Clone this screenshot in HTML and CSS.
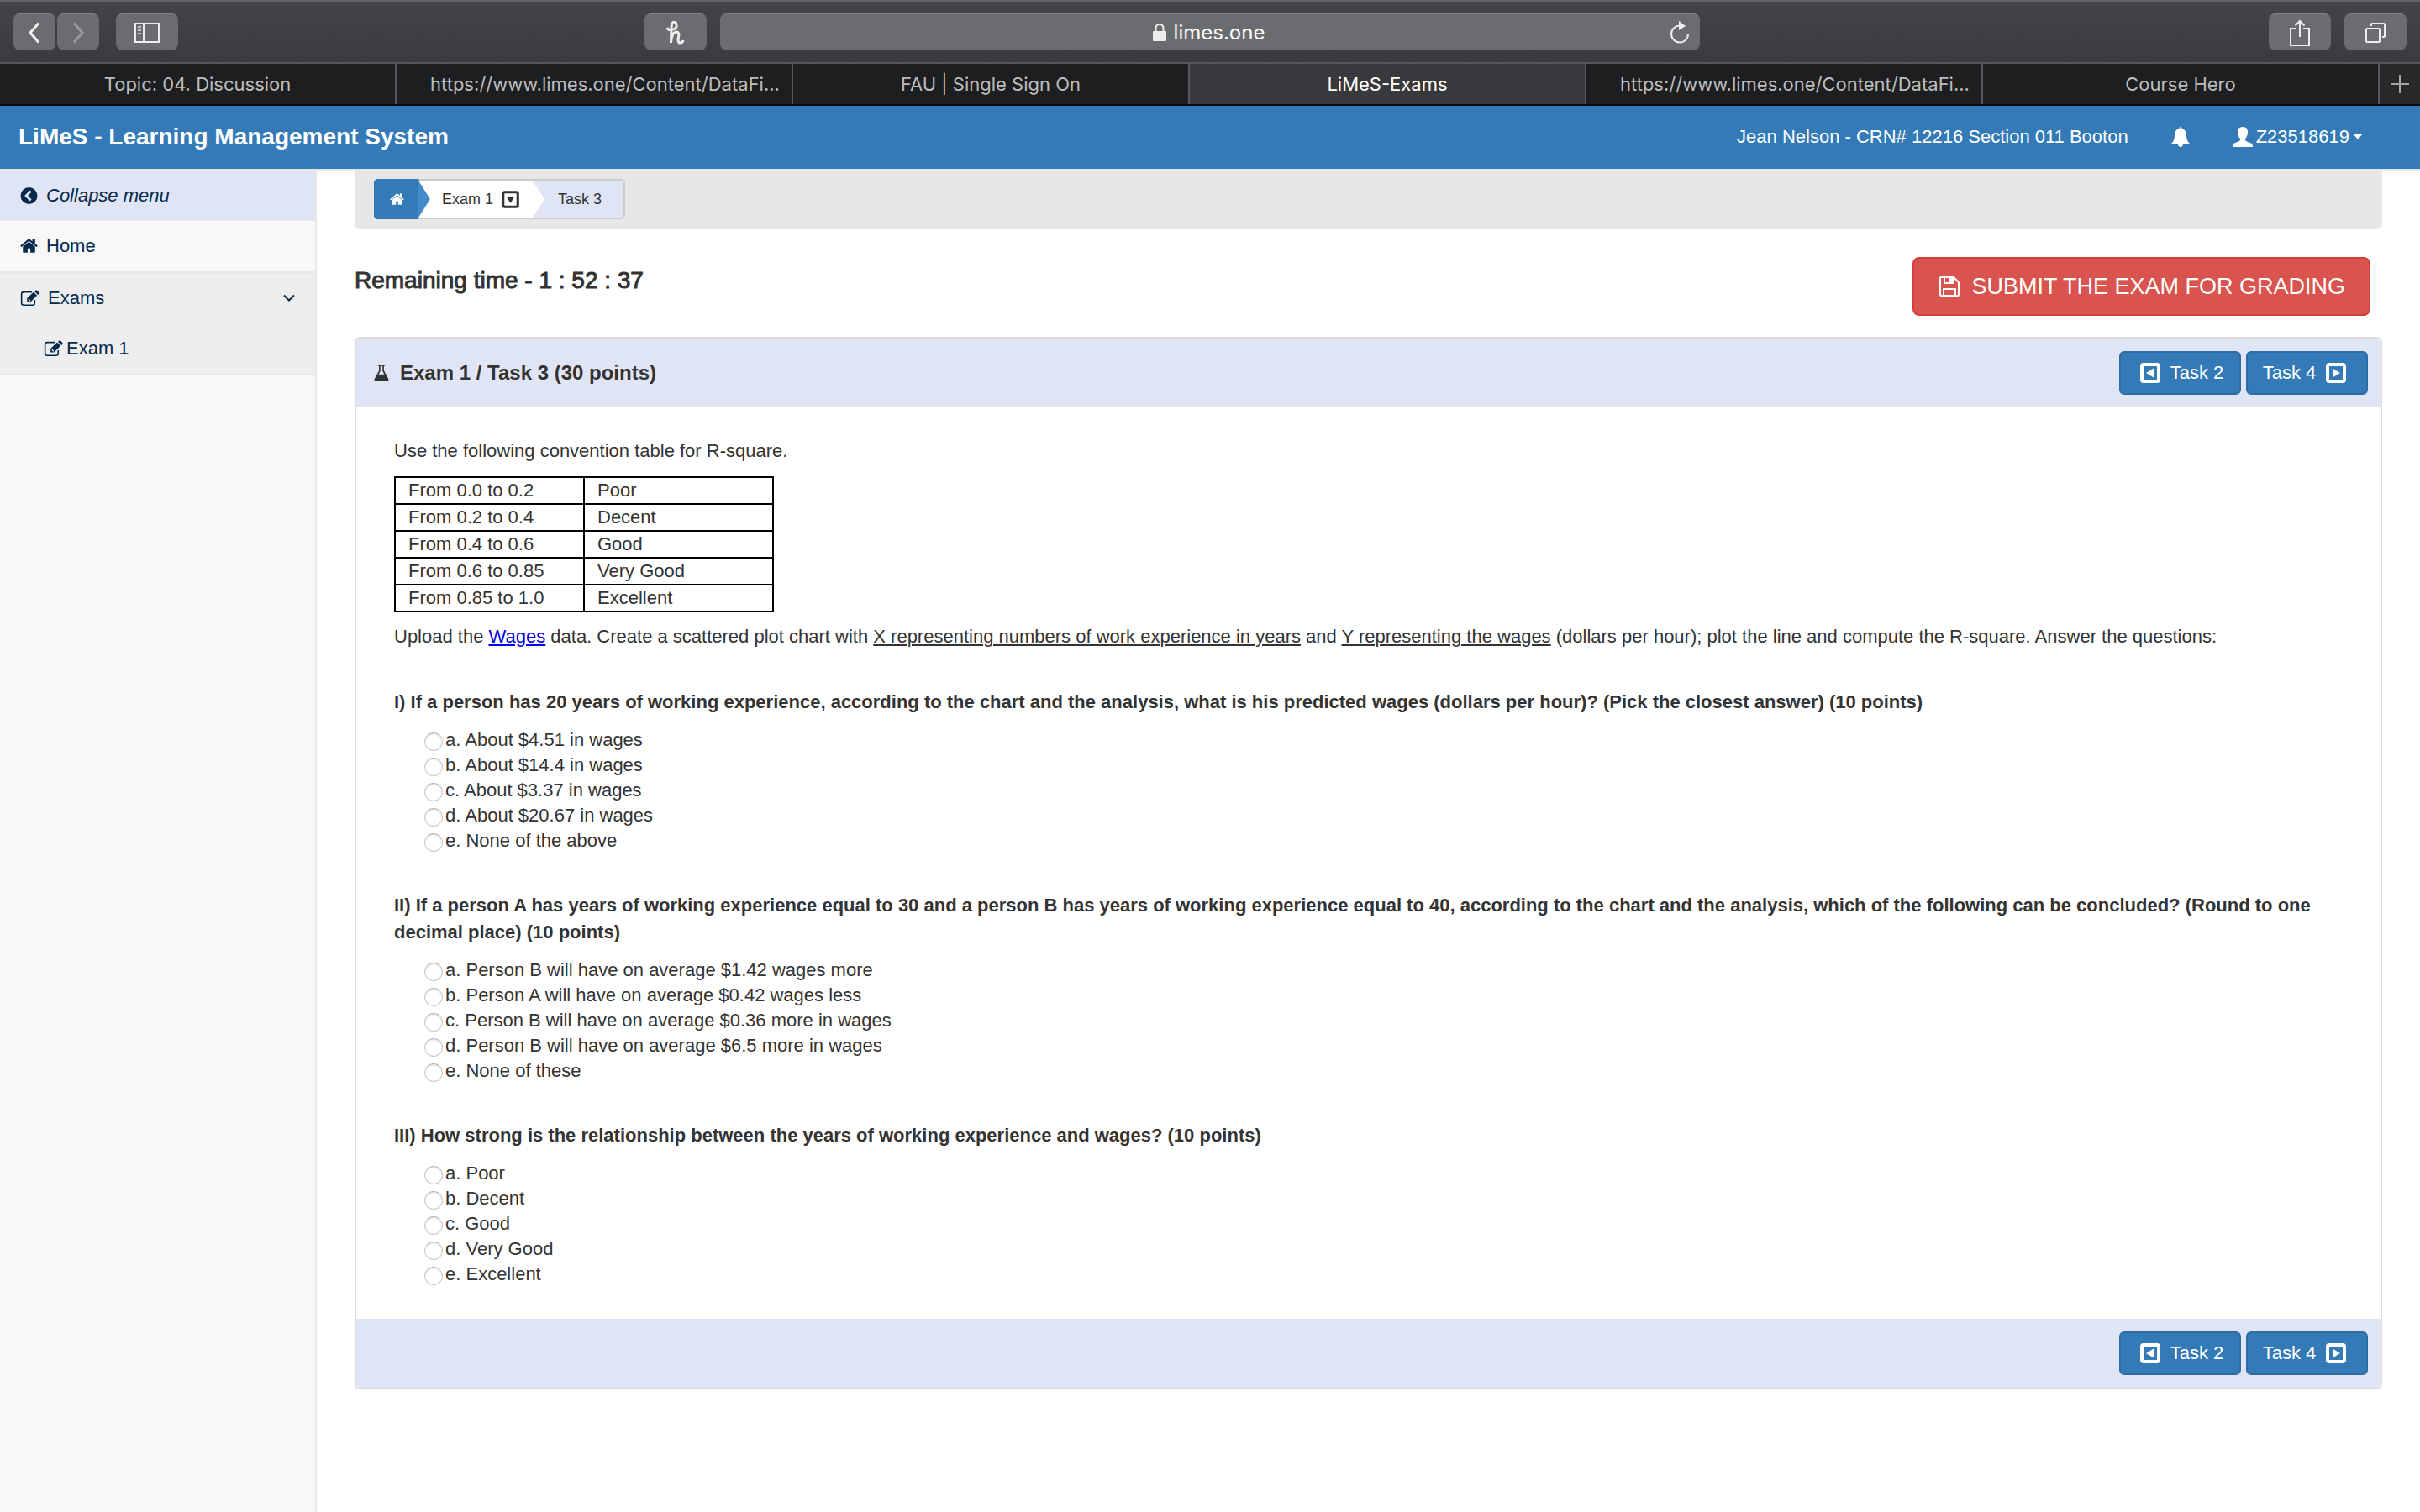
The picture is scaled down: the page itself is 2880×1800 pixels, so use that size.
FILE: index.html
```html
<!DOCTYPE html>
<html lang="en">
<head>
<meta charset="utf-8">
<title>LiMeS-Exams</title>
<link rel="stylesheet" href="styles.css">
</head>
<body>
<svg class="sprite" aria-hidden="true">
  <symbol id="i-home" viewBox="0 0 1664 1410"><path fill="currentColor" d="M1408 768v480q0 26-19 45t-45 19H960V928H704v384H320q-26 0-45-19t-19-45V768q0-1 .5-3t.5-3l575-474 575 474q1 2 1 6zm223-69l-62 74q-8 9-21 11h-3q-13 0-21-7L832 200 140 777q-12 8-24 7-13-2-21-11l-62-74q-8-10-7-23.500t11-21.500L756 55q32-26 76-26t76 26l244 204V64q0-14 9-23t23-9h192q14 0 23 9t9 23v408l219 182q10 8 11 21.500t-7 23.500z"/></symbol>
  <symbol id="i-back" viewBox="0 0 24 24"><circle cx="12" cy="12" r="12" fill="currentColor"/><path d="M14.500 5.500L8 12l6.500 6.500" fill="none" stroke="#dfe5f5" stroke-width="3.400"/></symbol>
  <symbol id="i-edit" viewBox="0 0 28 24"><path fill="none" stroke="currentColor" stroke-width="2" d="M21 14.500V19q0 3-3 3H5q-3 0-3-3V6q0-3 3-3h12"/><path fill="currentColor" d="M10 17.500v-5.500L19.500 3l5 5-9.500 9.500zM20.700 2l1.300-1.200q1.200-1.100 2.500 0l2.500 2.500q1 1.300 0 2.500L25.700 7z"/><path d="M12 13.500l2.500 2.500" stroke="#eee" stroke-width="1.500"/></symbol>
  <symbol id="i-flask" viewBox="0 0 24 26"><path fill="none" stroke="currentColor" stroke-width="2" d="M7 2h10M9.500 2v8L3 22q-1 2 1.500 2h15q2.500 0 1.500-2L14.500 10V2"/><path fill="currentColor" d="M7.500 15h9l5 8-1 2H4l-1-2z"/></symbol>
  <symbol id="i-floppy" viewBox="0 0 24 24"><path fill="none" stroke="currentColor" stroke-width="2" d="M1 2q0-1 1-1h14q1 0 2 1l4 4q1 1 1 2v14q0 1-1 1H2q-1 0-1-1zM5 23v-8h14v8M6 1v7h10V1"/><path fill="currentColor" d="M11 1h4v6h-4z"/></symbol>
  <symbol id="i-left" viewBox="0 0 24 24"><rect x="2" y="2" width="20" height="20" rx="2" fill="none" stroke="currentColor" stroke-width="4"/><path fill="currentColor" d="M16 6.500v11L7 12z"/></symbol>
  <symbol id="i-right" viewBox="0 0 24 24"><rect x="2" y="2" width="20" height="20" rx="2" fill="none" stroke="currentColor" stroke-width="4"/><path fill="currentColor" d="M8 6.500v11l9-5.500z"/></symbol>
  <symbol id="i-down" viewBox="0 0 24 24"><rect x="2" y="2" width="20" height="20" rx="2" fill="none" stroke="currentColor" stroke-width="3.500"/><path fill="currentColor" d="M6.500 8h11L12 17z"/></symbol>
</svg>

<header class="browser">
  <div class="toolbar">
    <div class="tools">
      <div class="pair">
        <button class="tool narrow" aria-label="Back"><svg width="16" height="26" viewBox="0 0 16 26"><path d="M13 1.500L3 13l10 11.500" fill="none" stroke="#f0f0f0" stroke-width="3"/></svg></button>
        <button class="tool narrow" aria-label="Forward"><svg width="16" height="26" viewBox="0 0 16 26"><path d="M3 1.500L13 13 3 24.500" fill="none" stroke="#98999b" stroke-width="3"/></svg></button>
      </div>
      <button class="tool" aria-label="Sidebar"><svg width="30" height="24" viewBox="0 0 30 24"><path d="M1 1h28v22H1zM11 1v22" fill="none" stroke="#ededed" stroke-width="2"/><path d="M4 5h4M4 9h4M4 13h4" stroke="#c4c4c5" stroke-width="2"/></svg></button>
    </div>
    <button class="tool" aria-label="Honey"><svg width="24" height="28" viewBox="0 0 24 28"><path d="M2 8q1 3 5 2.500 7-1 6-6Q12.500 1 10.500 1 7 1 7 9L6.500 26q1-13 6.500-13 4 0 2.500 6-1.500 7 2 7 3 0 3.500-3" fill="none" stroke="#ededed" stroke-width="3"/></svg></button>
    <div class="address">
      <span class="host"><svg width="18" height="22" viewBox="0 0 18 22"><path d="M4.500 10V6q0-5 4.500-5t4.500 5v4" fill="none" stroke="#ededed" stroke-width="2"/><rect x="1" y="9" width="16" height="12" rx="1" fill="#ededed"/></svg>limes.one</span>
      <button class="reload" aria-label="Reload"><svg width="24" height="28" viewBox="0 0 24 28"><path d="M12.500 5.500A10 10 0 1 0 22 15" fill="none" stroke="#ededed" stroke-width="2"/><path d="M11 0l8 6-8 5z" fill="#ededed"/></svg></button>
    </div>
    <div class="tools right">
      <button class="tool" aria-label="Share"><svg width="24" height="32" viewBox="0 0 24 32"><path d="M8 11H1v20h22V11h-7M12 21V2M6.500 7.500L12 2l5.500 5.500" fill="none" stroke="#ededed" stroke-width="2"/></svg></button>
      <button class="tool" aria-label="Tabs"><svg width="26" height="26" viewBox="0 0 26 26"><rect x="2" y="8" width="16" height="16" rx="1" fill="none" stroke="#ededed" stroke-width="2"/><path d="M8 5V3q0-1 1-1h14q1 0 1 1v14q0 1-1 1h-2" fill="none" stroke="#ededed" stroke-width="2"/></svg></button>
    </div>
  </div>
  <nav class="tabs" aria-label="Tabs">
    <a class="tab" href="#">Topic: 04. Discussion</a>
    <a class="tab address-tab" href="#">https://www.limes.one/Content/DataFi...</a>
    <a class="tab" href="#">FAU | Single Sign On</a>
    <a class="tab active" href="#">LiMeS-Exams</a>
    <a class="tab address-tab" href="#">https://www.limes.one/Content/DataFi...</a>
    <a class="tab" href="#">Course Hero</a>
    <button class="newtab" aria-label="New tab"><svg width="22" height="22" viewBox="0 0 22 22"><path d="M11 0v22M0 11h22" stroke="#a5a6a7" stroke-width="2"/></svg></button>
  </nav>
</header>

<header class="navbar">
  <a class="brand" href="#">LiMeS - Learning Management System</a>
  <span class="who">Jean Nelson - CRN# 12216 Section 011 Booton</span>
  <button class="bell" aria-label="Notifications"><svg width="22" height="24" viewBox="0 0 22 24"><path fill="currentColor" d="M11 0q1.500 0 1.500 2Q18 3.500 18 10q0 7 4 10H0q4-3 4-10 0-6.500 5.500-8Q9.500 0 11 0zM8 21h6q-.5 3-3 3t-3-3z"/></svg></button>
  <button class="user"><svg width="24" height="24" viewBox="0 0 24 24"><path fill="currentColor" d="M12 0q6 0 6 6 0 5-3 8v2q1 1.500 6 3 3 1 3 4v1H0v-1q0-3 3-4 5-1.500 6-3v-2q-3-3-3-8 0-6 6-6z"/></svg><span>Z23518619</span><i class="caret"></i></button>
</header>

<div class="layout">
  <nav class="sidebar" aria-label="Menu">
    <a class="item collapse" href="#"><svg width="21" height="20"><use href="#i-back"/></svg><em>Collapse menu</em></a>
    <a class="item" href="#"><svg width="21" height="18"><use href="#i-home"/></svg>Home</a>
    <div class="group">
      <a class="item" href="#"><svg width="23" height="20"><use href="#i-edit"/></svg>Exams<svg class="chev" width="14" height="10" viewBox="0 0 14 10"><path d="M1 1.500l6 6 6-6" fill="none" stroke="currentColor" stroke-width="2"/></svg></a>
      <a class="item sub" href="#"><svg width="23" height="20"><use href="#i-edit"/></svg>Exam 1</a>
    </div>
  </nav>

  <main class="content">
    <div class="well">
      <nav class="crumbs" aria-label="Breadcrumb">
        <a class="crumb first" href="#" aria-label="Home"><svg width="17" height="15"><use href="#i-home"/></svg></a>
        <a class="crumb mid" href="#">Exam 1<svg width="21" height="21"><use href="#i-down"/></svg></a>
        <a class="crumb last" href="#">Task 3</a>
      </nav>
    </div>

    <div class="status">
      <h2 class="time">Remaining time - 1 : 52 : 37</h2>
      <button class="submit"><svg width="24" height="24"><use href="#i-floppy"/></svg>SUBMIT THE EXAM FOR GRADING</button>
    </div>

    <section class="panel">
      <header class="bar">
        <h3 class="title"><svg width="20" height="22"><use href="#i-flask"/></svg>Exam 1 / Task 3 (30 points)</h3>
        <div class="pager">
          <button class="btn prev"><svg width="24" height="24"><use href="#i-left"/></svg>Task 2</button>
          <button class="btn next">Task 4<svg width="24" height="24"><use href="#i-right"/></svg></button>
        </div>
      </header>

      <form class="body">
        <p class="text">Use the following convention table for R-square.</p>
        <table class="scale">
          <tr><td>From 0.0 to 0.2</td><td>Poor</td></tr>
          <tr><td>From 0.2 to 0.4</td><td>Decent</td></tr>
          <tr><td>From 0.4 to 0.6</td><td>Good</td></tr>
          <tr><td>From 0.6 to 0.85</td><td>Very Good</td></tr>
          <tr><td>From 0.85 to 1.0</td><td>Excellent</td></tr>
        </table>
        <p class="text">Upload the <a class="link" href="#">Wages</a> data. Create a scattered plot chart with <u>X representing numbers of work experience in years</u> and <u>Y representing the wages</u> (dollars per hour); plot the line and compute the R-square. Answer the questions:</p>

        <fieldset class="question">
          <legend>I) If a person has 20 years of working experience, according to the chart and the analysis, what is his predicted wages (dollars per hour)? (Pick the closest answer) (10 points)</legend>
          <label class="option"><input type="radio" name="q1">a. About $4.51 in wages</label>
          <label class="option"><input type="radio" name="q1">b. About $14.4 in wages</label>
          <label class="option"><input type="radio" name="q1">c. About $3.37 in wages</label>
          <label class="option"><input type="radio" name="q1">d. About $20.67 in wages</label>
          <label class="option"><input type="radio" name="q1">e. None of the above</label>
        </fieldset>
        <fieldset class="question">
          <legend>II) If a person A has years of working experience equal to 30 and a person B has years of working experience equal to 40, according to the chart and the analysis, which of the following can be concluded? (Round to one decimal place) (10 points)</legend>
          <label class="option"><input type="radio" name="q2">a. Person B will have on average $1.42 wages more</label>
          <label class="option"><input type="radio" name="q2">b. Person A will have on average $0.42 wages less</label>
          <label class="option"><input type="radio" name="q2">c. Person B will have on average $0.36 more in wages</label>
          <label class="option"><input type="radio" name="q2">d. Person B will have on average $6.5 more in wages</label>
          <label class="option"><input type="radio" name="q2">e. None of these</label>
        </fieldset>
        <fieldset class="question">
          <legend>III) How strong is the relationship between the years of working experience and wages? (10 points)</legend>
          <label class="option"><input type="radio" name="q3">a. Poor</label>
          <label class="option"><input type="radio" name="q3">b. Decent</label>
          <label class="option"><input type="radio" name="q3">c. Good</label>
          <label class="option"><input type="radio" name="q3">d. Very Good</label>
          <label class="option"><input type="radio" name="q3">e. Excellent</label>
        </fieldset>
      </form>

      <footer class="bar">
        <div class="pager">
          <button class="btn prev"><svg width="24" height="24"><use href="#i-left"/></svg>Task 2</button>
          <button class="btn next">Task 4<svg width="24" height="24"><use href="#i-right"/></svg></button>
        </div>
      </footer>
    </section>
  </main>
</div>
</body>
</html>
```
FILE: styles.css
```css
* { box-sizing: border-box; }

body {
  display: flex;
  flex-direction: column;
  min-height: 100vh;
  margin: 0;
  background: #fff;
  color: #333;
  font: 22px/32px "Liberation Sans", Arial, sans-serif;
}

button { margin: 0; padding: 0; border: 0; background: none; color: inherit; font: inherit; }
a { color: inherit; text-decoration: none; }
svg { flex: none; }
.sprite { position: absolute; width: 0; height: 0; }

/* Browser chrome */
.browser { border-bottom: 2px solid #0b0b0c; font-family: Inter, sans-serif; }
.toolbar {
  display: grid;
  grid-template-columns: 735fr 74px 1166fr 825fr;
  gap: 16px;
  padding: 14px 16px;
  border-top: 2px solid #606265;
  border-bottom: 2px solid #55575a;
  background: linear-gradient(#424448, #3a3b3f);
}
.tools { display: flex; gap: 20px; }
.tools.right { justify-content: flex-end; gap: 16px; }
.pair { display: flex; gap: 2px; }
.tool {
  display: flex;
  align-items: center;
  justify-content: center;
  width: 74px;
  height: 44px;
  border-top: 1px solid #848587;
  border-radius: 8px;
  background: #6b6c6f;
}
.tool.narrow { width: 50px; }
.address {
  display: flex;
  align-items: center;
  padding: 0 12px;
  border-top: 1px solid #848587;
  border-radius: 8px;
  background: #6b6c6f;
  color: #fff;
  font-size: 24px;
}
.host { display: flex; flex: 1; align-items: center; justify-content: center; gap: 8px; padding-left: 20px; }
.reload { display: flex; }
.tabs { display: grid; grid-template-columns: repeat(6, 1fr) 48px; height: 48px; background: #1d1e20; }
.tab {
  border-right: 2px solid #55575a;
  color: #bcbcbc;
  line-height: 48px;
  text-align: center;
  white-space: nowrap;
}
.tab.active { background: #38393d; color: #fff; }
.address-tab { padding-left: 26px; }
.newtab { display: flex; align-items: center; justify-content: center; background: #28292b; }

/* Site header */
.navbar {
  display: flex;
  align-items: center;
  height: 75px;
  padding: 0 68px 2px 22px;
  background: #337ab7;
  color: #fff;
}
.brand { margin-right: auto; font-size: 28px; font-weight: bold; }
.bell { display: flex; margin: 0 51px; }
.user { display: flex; align-items: center; gap: 4px; }
.caret { border: 6px solid transparent; border-top: 7px solid #fff; border-bottom: 0; }

.layout { display: flex; flex: 1; border-top: 2px solid #e7e7e7; }

/* Sidebar */
.sidebar { width: 377px; border-right: 2px solid #e7e7e7; background: #f8f8f8; color: #05294a; }
.item { display: flex; align-items: center; gap: 10px; height: 60px; padding: 0 24px; }
.collapse { background: #dfe5f5; }
.group { border-top: 2px solid #e7e7e7; border-bottom: 2px solid #e7e7e7; background: #eee; }
.sub { padding-left: 52px; gap: 4px; }
.chev { margin-left: auto; }

/* Main column */
.content { flex: 1; min-width: 0; padding: 0 45px; }
.well { display: flex; height: 70px; padding: 10px 23px; border-radius: 0 0 6px 6px; background: #e7e7e7; }
.crumbs {
  display: flex;
  height: 48px;
  border: 2px solid #ccc;
  border-radius: 5px;
  background: #dfe5f5;
  font-size: 18px;
}
.crumb { display: flex; align-items: center; }
.first {
  width: 67px;
  margin: -2px -14px -2px -2px;
  padding-left: 19px;
  background: linear-gradient(90deg, #337ab7 53px, #428bca 53px);
  color: #fff;
  clip-path: polygon(3px 0, 53px 0, 100% 50%, 53px 100%, 3px 100%, 0 45px, 0 3px);
}
.mid {
  gap: 10px;
  padding: 0 30px 0 28px;
  background: #fff;
  clip-path: polygon(0 0, calc(100% - 14px) 0, 100% 50%, calc(100% - 14px) 100%, 0 100%, 14px 50%);
}
.last { padding: 0 26px 0 16px; }

.status { display: flex; align-items: flex-start; justify-content: space-between; padding: 33px 14px 25px 0; }
.time { margin: 12px 0 0; font-size: 28px; font-weight: normal; -webkit-text-stroke: 1px #333; }
.submit {
  display: flex;
  align-items: center;
  gap: 14px;
  height: 70px;
  padding: 0 28px 0 30px;
  border: 2px solid #d43f3a;
  border-radius: 8px;
  background: #d9534f;
  color: #fff;
  font-size: 27px;
}

.panel { border: 2px solid #ddd; border-radius: 6px; overflow: hidden; }
.bar { display: flex; align-items: center; height: 82px; padding: 0 15px 0 20px; background: #dfe5f5; }
.title { display: flex; align-items: center; gap: 12px; margin: 0; font-size: 24px; }
.pager { display: flex; gap: 6px; margin-left: auto; }
.btn {
  display: flex;
  align-items: center;
  justify-content: center;
  gap: 12px;
  width: 145px;
  height: 52px;
  border: 2px solid #2e6da4;
  border-radius: 6px;
  background: #337ab7;
  color: #fff;
}
.prev { padding-left: 4px; }
.next { padding-right: 6px; }

.body { padding: 36px 45px 38px; }
.text { margin: 0; }
.scale { width: 452px; margin: 14px 0 13px; border-collapse: collapse; table-layout: fixed; line-height: 30px; }
.scale td { padding: 0 15px; border: 2px solid #000; }
.link { color: #00e; text-decoration: underline; }
.question { min-width: 0; margin: 46px 0 0; padding: 0; border: 0; }
.question legend { padding: 0; margin-bottom: 14px; font-weight: bold; }
.option { display: flex; align-items: center; gap: 3px; height: 30px; padding-left: 36px; }
.option input {
  appearance: none;
  width: 22px;
  height: 22px;
  margin: 3px 0 0;
  border: 1px solid #ccc;
  border-top-color: #b5b5b5;
  border-radius: 50%;
  background: #fff;
  box-shadow: inset 0 1px 2px #ddd;
}
```
